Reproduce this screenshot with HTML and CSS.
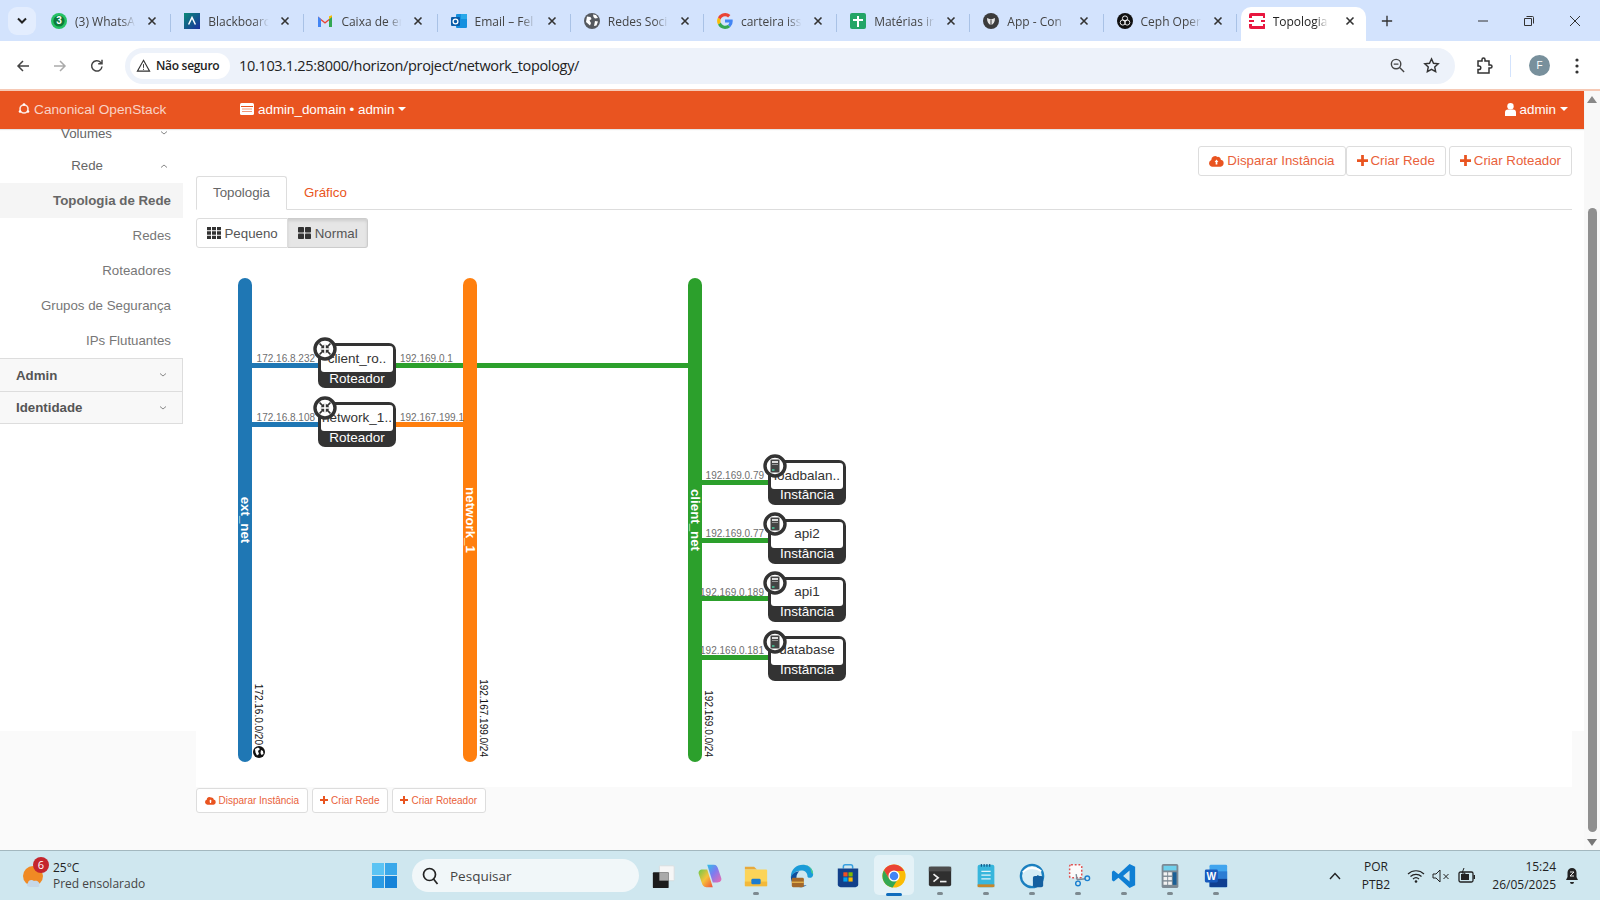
FILE: index.html
```html
<!DOCTYPE html>
<html lang="pt-BR">
<head>
  <meta charset="UTF-8">
  <title>Topologia de Rede</title>
  <link rel="stylesheet" href="styles.css">
</head>
<body>
  <!-- shared icons -->
  <svg class="defs" width="0" height="0">
    <symbol id="i-plus" viewBox="0 0 12 12"><path d="M4.5 0h3v4.5H12v3H7.5V12h-3V7.5H0v-3h4.5z"/></symbol>
    <symbol id="i-cloud" viewBox="0 0 16 12"><path d="M12.6 4.7A3 3 0 0 0 8.9 1.6 4 4 0 0 0 2.5 5 3.6 3.6 0 0 0 3.6 12h8.8a3.7 3.7 0 0 0 .2-7.3zM10 7H8.9v2.6H7.1V7H6l2-2.6z" fill-rule="evenodd"/></symbol>
    <symbol id="i-x" viewBox="0 0 12 12"><path d="M2.5 2.5l7 7M9.5 2.5l-7 7" fill="none" stroke="#333" stroke-width="1.6"/></symbol>
    <symbol id="i-down" viewBox="0 0 10 6"><path d="M2 1.5L5 4l3-2.5" fill="none" stroke="#888" stroke-width="1"/></symbol>
    <symbol id="i-up" viewBox="0 0 10 6"><path d="M2 4.5L5 2l3 2.5" fill="none" stroke="#888" stroke-width="1"/></symbol>
    <symbol id="i-router" viewBox="0 0 24 24">
      <circle cx="12" cy="12" r="10" fill="#fff" stroke="#333" stroke-width="3.4"/>
      <g fill="none" stroke="#333" stroke-width="1.7"><path d="M6.5 6.5l3.8 3.8M17.5 6.5l-3.8 3.8M6.5 17.5l3.8-3.8M17.5 17.5l-3.8-3.8"/></g>
      <g fill="#333"><path d="M11.2 11.2V7.6L7.6 11.2zM12.8 11.2V7.6l3.6 3.6zM11.2 12.8v3.6l-3.6-3.6zM12.8 12.8v3.6l3.6-3.6z"/></g>
    </symbol>
    <symbol id="i-server" viewBox="0 0 24 24">
      <circle cx="12" cy="12" r="10" fill="#fff" stroke="#333" stroke-width="3.4"/>
      <rect x="7.5" y="5.5" width="9" height="13" rx="1" fill="#444"/>
      <rect x="9" y="7" width="6" height="2" fill="#ddd"/>
      <rect x="9" y="10" width="6" height="1" fill="#999"/>
      <rect x="9" y="15" width="2.5" height="2" fill="#4a8"/>
    </symbol>
  </svg>

  <!-- browser tabs -->
  <div class="tabstrip">
    <button class="tab-search"><svg width="12" height="8" viewBox="0 0 12 8"><path d="M2 1.5l4 4 4-4" fill="none" stroke="#222" stroke-width="2"/></svg></button>
    <div class="tab">
      <svg class="favicon" viewBox="0 0 16 16"><circle cx="8" cy="8" r="8" fill="#25c264"/><circle cx="8" cy="8" r="5.6" fill="#0c7a3c"/><text x="8" y="11.4" class="fav-num">3</text></svg>
      <span class="tab-title">(3) WhatsA</span>
      <svg class="tab-close"><use href="#i-x"/></svg>
    </div>
    <div class="tab">
      <svg class="favicon" viewBox="0 0 16 16"><defs><linearGradient id="bb" x1="0" y1="0" x2="1" y2="1"><stop offset="0" stop-color="#0a8a78"/><stop offset="1" stop-color="#1b2f9e"/></linearGradient></defs><rect width="16" height="16" fill="url(#bb)"/><path d="M4.6 11.5L8 4.5l3.4 7" fill="none" stroke="#fff" stroke-width="1.5"/></svg>
      <span class="tab-title">Blackboarc</span>
      <svg class="tab-close"><use href="#i-x"/></svg>
    </div>
    <div class="tab">
      <svg class="favicon" viewBox="0 0 16 16"><path d="M1 14V3.5L8 9l7-5.500V14h-3V7.500L8 10.700 4 7.500V14z" fill="#ea4335"/><path d="M1 3.500V14h3V6z" fill="#4285f4"/><path d="M15 3.500V14h-3V6z" fill="#34a853"/><path d="M12 3.300l3-1v1.700L12 6.300z" fill="#fbbc04"/></svg>
      <span class="tab-title">Caixa de er</span>
      <svg class="tab-close"><use href="#i-x"/></svg>
    </div>
    <div class="tab">
      <svg class="favicon" viewBox="0 0 16 16"><rect x="5" y="1" width="11" height="14" rx="1" fill="#1490df"/><rect x="10" y="1" width="6" height="5" fill="#28a8ea"/><rect x="0" y="4" width="9" height="9" rx="1" fill="#0a5ca8"/><circle cx="4.500" cy="8.500" r="2.400" fill="none" stroke="#fff" stroke-width="1.300"/></svg>
      <span class="tab-title">Email – Fel</span>
      <svg class="tab-close"><use href="#i-x"/></svg>
    </div>
    <div class="tab">
      <svg class="favicon" viewBox="0 0 16 16"><circle cx="8" cy="8" r="8" fill="#55595f"/><path d="M3 3.500l3.500.5 1 2-2 1.500 1.500 2.500-1 2.500L2 9zM9 1.500l3 .5 2 3-3 .5-1.500-1.500zM11 8l3 .5-1.500 4-2.500.5z" fill="#fff"/></svg>
      <span class="tab-title">Redes Soci</span>
      <svg class="tab-close"><use href="#i-x"/></svg>
    </div>
    <div class="tab">
      <svg class="favicon" viewBox="0 0 16 16"><path d="M15.700 8.200c0-.6 0-1.100-.1-1.600H8v3h4.400a3.800 3.800 0 0 1-1.600 2.500l2.500 2a7.700 7.700 0 0 0 2.400-5.900z" fill="#4285f4"/><path d="M8 16c2.200 0 4-.7 5.300-1.900l-2.500-2a4.800 4.800 0 0 1-7.100-2.500l-2.700 2A8 8 0 0 0 8 16z" fill="#34a853"/><path d="M3.700 9.600a4.800 4.800 0 0 1 0-3.200l-2.700-2a8 8 0 0 0 0 7.200z" fill="#fbbc05"/><path d="M8 3.200c1.200 0 2.300.4 3.100 1.200l2.300-2.300A8 8 0 0 0 1 4.400l2.700 2A4.800 4.800 0 0 1 8 3.200z" fill="#ea4335"/></svg>
      <span class="tab-title">carteira iss</span>
      <svg class="tab-close"><use href="#i-x"/></svg>
    </div>
    <div class="tab">
      <svg class="favicon" viewBox="0 0 16 16"><rect width="16" height="16" rx="2" fill="#23a566"/><path d="M7 3h2v3h4v2H9v6H7V8H3V6h4z" fill="#fff"/></svg>
      <span class="tab-title">Matérias ir</span>
      <svg class="tab-close"><use href="#i-x"/></svg>
    </div>
    <div class="tab">
      <svg class="favicon" viewBox="0 0 16 16"><circle cx="8" cy="8" r="8" fill="#3b3b3b"/><path d="M4 5l4 1.500L12 5c0 4-1.500 6.500-4 7-2.500-.5-4-3-4-7z" fill="#e4e4e4"/><path d="M8 7v5" stroke="#3b3b3b" stroke-width="1"/></svg>
      <span class="tab-title">App - Con</span>
      <svg class="tab-close"><use href="#i-x"/></svg>
    </div>
    <div class="tab">
      <svg class="favicon" viewBox="0 0 16 16"><circle cx="8" cy="8" r="8" fill="#111"/><g fill="none" stroke="#fff" stroke-width=".9"><circle cx="8" cy="5.500" r="2.600"/><circle cx="5.800" cy="9.500" r="2.600"/><circle cx="10.200" cy="9.500" r="2.600"/></g></svg>
      <span class="tab-title">Ceph Oper</span>
      <svg class="tab-close"><use href="#i-x"/></svg>
    </div>
    <div class="tab tab-active">
      <svg class="favicon" viewBox="0 0 16 16"><rect width="17" height="16" rx="2" fill="#e8173f"/><rect x="3" y="3" width="11" height="10" fill="#fff"/><rect y="5" width="3" height="2" fill="#fff"/><rect y="9" width="3" height="2" fill="#fff"/><rect x="14" y="5" width="3" height="2" fill="#fff"/><rect x="14" y="9" width="3" height="2" fill="#fff"/><rect x="1" y="7" width="4" height="2" fill="#e8173f"/><rect x="12" y="7" width="4" height="2" fill="#e8173f"/></svg>
      <span class="tab-title">Topologia</span>
      <svg class="tab-close"><use href="#i-x"/></svg>
    </div>
    <svg class="tab-new" viewBox="0 0 14 14"><path d="M7 1v12M1 7h12" stroke="#333" stroke-width="1.600"/></svg>
    <div class="window-controls">
      <svg viewBox="0 0 12 12"><path d="M1 6h10" stroke="#333"/></svg>
      <svg viewBox="0 0 12 12"><path d="M3.500 1.500h6a1 1 0 0 1 1 1v6M1.500 3.500h7v7h-7z" fill="none" stroke="#333"/></svg>
      <svg viewBox="0 0 12 12"><path d="M1 1l10 10M11 1L1 11" stroke="#333"/></svg>
    </div>
  </div>

  <!-- address bar -->
  <div class="toolbar">
    <button class="nav-btn"><svg viewBox="0 0 16 16"><path d="M14 8H3M8 3L3 8l5 5" fill="none" stroke="#444" stroke-width="1.500"/></svg></button>
    <button class="nav-btn"><svg viewBox="0 0 16 16"><path d="M2 8h11M8 3l5 5-5 5" fill="none" stroke="#aaa" stroke-width="1.500"/></svg></button>
    <button class="nav-btn"><svg viewBox="0 0 16 16"><path d="M13 8.500A5.200 5.200 0 1 1 11.500 4.200L13 5.500M13 1.800v3.900H9.200" fill="none" stroke="#444" stroke-width="1.500"/></svg></button>
    <div class="address">
      <div class="chip">
        <svg viewBox="0 0 16 16" width="15" height="15"><path d="M8 2.500L14.500 14h-13z" fill="none" stroke="#333" stroke-width="1.200"/><path d="M8 6.500v4M8 11.500v1.200" stroke="#333"/></svg>
        <span>Não seguro</span>
      </div>
      <span class="url">10.103.1.25:8000/horizon/project/network_topology/</span>
      <svg class="addr-icon addr-zoom" viewBox="0 0 18 18"><circle cx="7.500" cy="7.500" r="5" fill="none" stroke="#444" stroke-width="1.500"/><path d="M11.500 11.500L16 16M5 7.500h5" stroke="#444" stroke-width="1.500"/></svg>
      <svg class="addr-icon" viewBox="0 0 18 18"><path d="M9 2l2.100 4.600 5 .5-3.700 3.400 1 4.900L9 13l-4.400 2.400 1-4.900L1.900 7.100l5-.5z" fill="none" stroke="#333" stroke-width="1.500"/></svg>
    </div>
    <svg class="tool-ext" viewBox="0 0 18 18"><path d="M3 4h4V2.500a1.500 1.500 0 0 1 3 0V4h4v4h1.500a1.500 1.500 0 0 1 0 3H14v5H3v-3.500h1a1.800 1.800 0 0 0 0-3.600H3z" fill="none" stroke="#333" stroke-width="1.500"/></svg>
    <span class="tool-sep"></span>
    <span class="avatar">F</span>
    <svg class="tool-menu" viewBox="0 0 4 18"><circle cx="2" cy="3" r="1.600" fill="#333"/><circle cx="2" cy="9" r="1.600" fill="#333"/><circle cx="2" cy="15" r="1.600" fill="#333"/></svg>
  </div>

  <div class="browser-view">
    <div class="page">
      <header class="topbar">
        <div class="brand">
          <svg width="12" height="12" viewBox="0 0 12 12"><circle cx="6" cy="6" r="4" fill="none" stroke="#fff" stroke-width="1.600" opacity=".85"/><circle cx="6" cy="1.500" r="1.300" fill="#fff"/><circle cx="2" cy="8.500" r="1.300" fill="#fff"/><circle cx="10" cy="8.500" r="1.300" fill="#fff"/></svg>
          <span>Canonical OpenStack</span>
        </div>
        <div class="context">
          <svg width="14" height="12" viewBox="0 0 14 12"><rect width="14" height="12" rx="1.500" fill="#fff"/><path d="M1 3.500h12" stroke="#e95420"/><path d="M2 6h10M2 8.500h10" stroke="#e95420" stroke-opacity=".6"/></svg>
          <span>admin_domain • admin</span>
          <i class="caret"></i>
        </div>
        <div class="user">
          <svg width="11" height="13" viewBox="0 0 11 13"><circle cx="5.500" cy="3.300" r="3.200" fill="#fff"/><path d="M0 13V9.500a3 3 0 0 1 3-3h5a3 3 0 0 1 3 3V13z" fill="#fff"/></svg>
          <span>admin</span>
          <i class="caret"></i>
        </div>
      </header>

      <div class="main">
        <nav class="sidebar">
          <div class="side-items">
            <a class="side-link side-group side-first">Volumes<svg class="chev"><use href="#i-down"/></svg></a>
            <a class="side-link side-group">Rede<svg class="chev"><use href="#i-up"/></svg></a>
            <a class="side-link side-current">Topologia de Rede</a>
            <a class="side-link">Redes</a>
            <a class="side-link">Roteadores</a>
            <a class="side-link">Grupos de Segurança</a>
            <a class="side-link">IPs Flutuantes</a>
            <div class="side-panel">Admin<svg class="chev"><use href="#i-down"/></svg></div>
            <div class="side-panel">Identidade<svg class="chev"><use href="#i-down"/></svg></div>
          </div>
        </nav>

        <section class="content">
          <div class="content-box">
            <div class="actions">
              <a class="btn btn-joined"><svg class="ic-cloud"><use href="#i-cloud"/></svg>Disparar Instância</a>
              <a class="btn btn-joined"><svg class="ic-plus"><use href="#i-plus"/></svg>Criar Rede</a>
              <a class="btn btn-last"><svg class="ic-plus"><use href="#i-plus"/></svg>Criar Roteador</a>
            </div>
            <div class="tabs">
              <a class="tabs-item tabs-active">Topologia</a>
              <a class="tabs-item">Gráfico</a>
            </div>
            <div class="toggle">
              <a class="toggle-btn">
                <svg width="14" height="12" viewBox="0 0 14 12"><path d="M0 0h4v3.300H0zM5 0h4v3.300H5zM10 0h4v3.300h-4zM0 4.300h4v3.400H0zM5 4.300h4v3.400H5zM10 4.300h4v3.400h-4zM0 8.700h4V12H0zM5 8.700h4V12H5zM10 8.700h4V12h-4z" fill="#333"/></svg>
                Pequeno
              </a>
              <a class="toggle-btn toggle-on">
                <svg width="13" height="12" viewBox="0 0 13 12"><rect width="6" height="5.500" rx=".8" fill="#333"/><rect x="7" width="6" height="5.500" rx=".8" fill="#333"/><rect y="6.500" width="6" height="5.500" rx=".8" fill="#333"/><rect x="7" y="6.500" width="6" height="5.500" rx=".8" fill="#333"/></svg>
                Normal
              </a>
            </div>

            <!-- network diagram, viewBox uses page coordinates -->
            <svg class="topology" width="800" height="539" viewBox="196 248 800 539">
              <rect class="link-blue" x="250" y="363" width="70" height="5"/>
              <rect class="link-green" x="394" y="363" width="295" height="5"/>
              <rect class="link-blue" x="250" y="422" width="70" height="5"/>
              <rect class="link-orange" x="394" y="422" width="70" height="5"/>
              <rect class="link-green" x="700" y="480" width="70" height="5"/>
              <rect class="link-green" x="700" y="538" width="70" height="5"/>
              <rect class="link-green" x="700" y="596" width="70" height="5"/>
              <rect class="link-green" x="700" y="655" width="70" height="5"/>

              <rect class="link-blue" x="238" y="278" width="14" height="484" rx="7"/>
              <rect class="link-orange" x="463" y="278" width="14" height="484" rx="7"/>
              <rect class="link-green" x="688" y="278" width="14" height="484" rx="7"/>
              <text class="net-name" transform="translate(241 520) rotate(90)">ext_net</text>
              <text class="net-name" transform="translate(466 520) rotate(90)">network_1</text>
              <text class="net-name" transform="translate(691 520) rotate(90)">client_net</text>

              <text class="net-cidr" transform="translate(255 745) rotate(90)">172.16.0.0/20</text>
              <text class="net-cidr" transform="translate(480 757) rotate(90)">192.167.199.0/24</text>
              <text class="net-cidr" transform="translate(705 757) rotate(90)">192.169.0.0/24</text>
              <circle cx="259" cy="752" r="6" fill="#111"/>
              <path d="M255 749l3-1.500 2 1.500-2 2 1 3-2 1.500-1.500-3zM261 750l2 1 .5 3-2 1-1-2z" fill="#fff"/>

              <text class="ip ip-end" x="315" y="362">172.16.8.232</text>
              <text class="ip" x="400" y="362">192.169.0.1</text>
              <text class="ip ip-end" x="315" y="421">172.16.8.108</text>
              <text class="ip" x="400" y="421">192.167.199.1</text>
              <text class="ip ip-end" x="764" y="479">192.169.0.79</text>
              <text class="ip ip-end" x="764" y="537">192.169.0.77</text>
              <text class="ip ip-end" x="764" y="596">192.169.0.189</text>
              <text class="ip ip-end" x="764" y="654">192.169.0.181</text>

              <g>
                <rect class="node-box" x="318" y="343" width="78" height="45" rx="7"/>
                <rect class="node-top" x="321" y="346" width="72" height="26" rx="3"/>
                <text class="node-name" x="357" y="363">client_ro..</text>
                <text class="node-type" x="357" y="383">Roteador</text>
                <use href="#i-router" x="313" y="337" width="24" height="24"/>
              </g>
              <g>
                <rect class="node-box" x="318" y="402" width="78" height="45" rx="7"/>
                <rect class="node-top" x="321" y="405" width="72" height="26" rx="3"/>
                <text class="node-name" x="357" y="422">network_1..</text>
                <text class="node-type" x="357" y="442">Roteador</text>
                <use href="#i-router" x="313" y="396" width="24" height="24"/>
              </g>
              <g>
                <rect class="node-box" x="768" y="460" width="78" height="45" rx="7"/>
                <rect class="node-top" x="771" y="463" width="72" height="26" rx="3"/>
                <text class="node-name" x="807" y="480">loadbalan..</text>
                <text class="node-type" x="807" y="499">Instância</text>
                <use href="#i-server" x="763" y="454" width="24" height="24"/>
              </g>
              <g>
                <rect class="node-box" x="768" y="519" width="78" height="45" rx="7"/>
                <rect class="node-top" x="771" y="522" width="72" height="26" rx="3"/>
                <text class="node-name" x="807" y="538">api2</text>
                <text class="node-type" x="807" y="558">Instância</text>
                <use href="#i-server" x="763" y="512" width="24" height="24"/>
              </g>
              <g>
                <rect class="node-box" x="768" y="577" width="78" height="45" rx="7"/>
                <rect class="node-top" x="771" y="580" width="72" height="26" rx="3"/>
                <text class="node-name" x="807" y="596">api1</text>
                <text class="node-type" x="807" y="616">Instância</text>
                <use href="#i-server" x="763" y="571" width="24" height="24"/>
              </g>
              <g>
                <rect class="node-box" x="768" y="636" width="78" height="45" rx="7"/>
                <rect class="node-top" x="771" y="639" width="72" height="26" rx="3"/>
                <text class="node-name" x="807" y="654">database</text>
                <text class="node-type" x="807" y="674">Instância</text>
                <use href="#i-server" x="763" y="630" width="24" height="24"/>
              </g>
            </svg>
          </div>
          <div class="actions-bottom">
            <a class="btn btn-xs"><svg class="ic-cloud-xs"><use href="#i-cloud"/></svg>Disparar Instância</a>
            <a class="btn btn-xs"><svg class="ic-plus-xs"><use href="#i-plus"/></svg>Criar Rede</a>
            <a class="btn btn-xs"><svg class="ic-plus-xs"><use href="#i-plus"/></svg>Criar Roteador</a>
          </div>
        </section>
      </div>
    </div>

    <div class="scrollbar">
      <i class="arrow-up"></i>
      <div class="thumb"></div>
      <i class="arrow-down"></i>
    </div>
  </div>

  <!-- windows taskbar -->
  <footer class="taskbar">
    <div class="weather">
      <svg class="weather-icon" width="26" height="26" viewBox="0 0 26 26"><circle cx="11" cy="13" r="10" fill="#f08a24"/><path d="M8 24c-3 0-4-3-2-4 0-3 4-4 6-2 3-1 6 1 5 4 1 1 0 2-1 2z" fill="#c5d8e8"/></svg>
      <span class="weather-badge">6</span>
      <div class="weather-text">
        <span>25°C</span>
        <span>Pred ensolarado</span>
      </div>
    </div>
    <svg class="start" viewBox="0 0 25 25"><rect width="12" height="12" fill="#5cc4f4"/><rect x="13" width="12" height="12" fill="#3aa8ea"/><rect y="13" width="12" height="12" fill="#2a9be4"/><rect x="13" y="13" width="12" height="12" fill="#1583d8"/></svg>
    <div class="search">
      <svg width="18" height="18" viewBox="0 0 18 18"><circle cx="7.500" cy="7.500" r="6" fill="none" stroke="#222" stroke-width="1.700"/><path d="M11.500 12l4 5" stroke="#222" stroke-width="1.700"/></svg>
      <span>Pesquisar</span>
    </div>
    <div class="task-icons">
      <div class="task-icon">
        <svg viewBox="0 0 28 28"><rect x="9" y="3" width="16" height="16" rx="1" fill="#f6f6f6" stroke="#d8dee0"/><rect x="2" y="10" width="17" height="17" rx="1" fill="#1c1c1c"/><rect x="9" y="10" width="10" height="9" fill="#aaa"/></svg>
      </div>
      <div class="task-icon">
        <svg viewBox="0 0 28 28"><defs><linearGradient id="cp" x1="0" y1="0" x2="1" y2="1"><stop offset="0" stop-color="#2fc0e8"/><stop offset=".45" stop-color="#7c7cf0"/><stop offset="1" stop-color="#f06ab0"/></linearGradient><linearGradient id="cp2" x1="0" y1="0" x2="1" y2="1"><stop offset="0" stop-color="#6bc84c"/><stop offset=".5" stop-color="#f6c23a"/><stop offset="1" stop-color="#f0503a"/></linearGradient></defs><path d="M11 2h7c3 0 4 2 5 5l3 9c1 3-1 5-4 5h-5z" fill="url(#cp)"/><path d="M17 26h-7c-3 0-4-2-5-5L2 12C1 9 3 7 6 7h5z" fill="url(#cp2)"/></svg>
      </div>
      <div class="task-icon task-dot">
        <svg viewBox="0 0 28 28"><path d="M2 4h10l3 3H2z" fill="#e8a93a"/><rect x="2" y="7" width="24" height="18" rx="1" fill="#fcd458"/><rect x="2" y="20" width="24" height="5" fill="#f3b93a"/><rect x="9" y="17" width="10" height="6" rx="1.500" fill="#1b7cd0"/></svg>
      </div>
      <div class="task-icon">
        <svg viewBox="0 0 28 28"><path d="M2 15C2 7 8 2 15 2c7 0 11 5 11 10 0 4-4 5-6 3 0-5-3-7-7-7-5 0-8 3-11 7z" fill="#1a9bd8"/><path d="M26 12c0-5-4-10-11-10 4 0 9 2 9 8z" fill="#4bd18a"/><path d="M13 26c-7 0-11-5-11-11 2-3 5-6 9-6-2 2-3 4-3 7 0 5 5 9 11 8-2 1-4 2-6 2z" fill="#0e4f9e"/><rect x="3" y="16" width="13" height="10" rx="1.500" fill="#a3682a"/><rect x="3" y="20" width="13" height="1.500" fill="#e4b04a"/></svg>
      </div>
      <div class="task-icon">
        <svg viewBox="0 0 28 28"><path d="M9 6V4a2 2 0 0 1 2-2h6a2 2 0 0 1 2 2v2" fill="none" stroke="#38a0e0" stroke-width="1.600"/><path d="M3 6h22v17a3 3 0 0 1-3 3H6a3 3 0 0 1-3-3z" fill="#12408a"/><rect x="9" y="10" width="4.500" height="4.500" fill="#f25022"/><rect x="14.500" y="10" width="4.500" height="4.500" fill="#7fba00"/><rect x="9" y="15.500" width="4.500" height="4.500" fill="#00a4ef"/><rect x="14.500" y="15.500" width="4.500" height="4.500" fill="#ffb900"/></svg>
      </div>
      <div class="task-icon task-active">
        <svg viewBox="0 0 28 28"><circle cx="14" cy="14" r="12.500" fill="#fbbc05"/><path d="M14 1.500A12.500 12.500 0 0 0 3.200 7.800L9 17.500 14 8.500h10.800A12.500 12.500 0 0 0 14 1.500z" fill="#ea4335"/><path d="M3.200 7.800A12.500 12.500 0 0 0 12.500 26.400L18 17.500 9 17.500z" fill="#34a853"/><circle cx="14" cy="14" r="6" fill="#fff"/><circle cx="14" cy="14" r="4.600" fill="#4285f4"/></svg>
      </div>
      <div class="task-icon task-dot">
        <svg viewBox="0 0 28 28"><rect x="2" y="4" width="24" height="21" rx="2" fill="#2f2f2f"/><rect x="2" y="4" width="24" height="5" fill="#4d4d4d"/><path d="M7 12l5 4-5 4" fill="none" stroke="#eee" stroke-width="1.800"/><path d="M14 20h7" stroke="#eee" stroke-width="1.800"/></svg>
      </div>
      <div class="task-icon task-dot">
        <svg viewBox="0 0 28 28"><rect x="5" y="2" width="18" height="24" rx="2" fill="#38b6dc"/><rect x="5" y="23" width="18" height="3" fill="#c8862a"/><path d="M9 9h10M9 13h10M9 17h10" stroke="#fff" stroke-width="1.400" opacity=".85"/><path d="M9 1v3M12 1v3M15 1v3M18 1v3" stroke="#0e4f80" stroke-width="1.200"/></svg>
      </div>
      <div class="task-icon task-dot">
        <svg viewBox="0 0 28 28"><circle cx="14" cy="14" r="12" fill="#d6edf6" stroke="#1a7fbf" stroke-width="2.500"/><path d="M4 10c6-6 14-6 20-1" fill="none" stroke="#fff" stroke-width="2"/><path d="M16 26a12 12 0 0 0 10-10l-6-3-5 6z" fill="#1b6fae"/><rect x="15" y="14" width="11" height="12" rx="2" fill="#1560a0"/></svg>
      </div>
      <div class="task-icon task-dot">
        <svg viewBox="0 0 28 28"><rect x="5" y="2" width="13" height="14" rx="1.500" fill="#fbfbfb" stroke="#e05050" stroke-dasharray="2 2" stroke-width="1.600"/><path d="M12 12l1 6M13 18l9-1" stroke="#7a8a98" stroke-width="1.500"/><circle cx="14" cy="22" r="2.500" fill="none" stroke="#1a7fd0" stroke-width="1.500"/><circle cx="24" cy="16.500" r="2.500" fill="none" stroke="#1a7fd0" stroke-width="1.500"/></svg>
      </div>
      <div class="task-icon task-dot">
        <svg viewBox="0 0 28 28"><path d="M20 1l6 3v20l-6 3L8 16l-5 4-2-1.500v-9L3 8l5 4zM20 8l-7 6 7 6z" fill="#0f7fd4" fill-rule="evenodd"/></svg>
      </div>
      <div class="task-icon task-dot">
        <svg viewBox="0 0 28 28"><rect x="5" y="1" width="18" height="26" rx="2" fill="#7d8a94"/><rect x="7" y="3" width="14" height="5" fill="#6fd0ec"/><g fill="#f2f2f2"><rect x="7" y="10" width="4" height="3.500"/><rect x="12" y="10" width="4" height="3.500"/><rect x="7" y="15" width="4" height="3.500"/><rect x="12" y="15" width="4" height="3.500"/><rect x="7" y="20" width="4" height="3.500"/><rect x="12" y="20" width="4" height="3.500"/></g><rect x="17" y="10" width="4" height="13.500" fill="#1a5f96"/></svg>
      </div>
      <div class="task-icon task-dot">
        <svg viewBox="0 0 28 28"><rect x="7" y="2" width="19" height="24" rx="1.500" fill="#41a5ee"/><rect x="7" y="9" width="19" height="8" fill="#2b7cd3"/><rect x="7" y="17" width="19" height="9" fill="#103f91"/><rect x="2" y="7" width="14" height="14" rx="1.500" fill="#185abd"/><text x="9" y="18" class="word-w">W</text></svg>
      </div>
    </div>
    <div class="tray">
      <svg class="tray-chev" width="12" height="8" viewBox="0 0 12 8"><path d="M1 7l5-5.500L11 7" fill="none" stroke="#222" stroke-width="1.400"/></svg>
      <div class="tray-lang"><span>POR</span><span>PTB2</span></div>
      <svg class="tray-wifi" width="18" height="16" viewBox="0 0 18 16"><g fill="none" stroke="#222" stroke-width="1.200"><path d="M1 6a11.500 11.500 0 0 1 16 0M3.500 8.500a8 8 0 0 1 11 0M6 11a4.500 4.500 0 0 1 6 0"/></g><circle cx="9" cy="13.500" r="1.300" fill="#222"/></svg>
      <svg class="tray-sound" width="20" height="14" viewBox="0 0 20 14"><path d="M1 5h3l4-4v12l-4-4H1z" fill="none" stroke="#222"/><path d="M11.500 5l5 5M16.500 5l-5 5" stroke="#222"/></svg>
      <svg class="tray-batt" width="18" height="16" viewBox="0 0 18 16"><rect x="1" y="4" width="14" height="10" rx="1.500" fill="none" stroke="#222" stroke-width="1.300"/><rect x="3" y="6" width="8" height="6" fill="#222"/><path d="M6 0L4 5h3l-1 3" fill="none" stroke="#222"/><rect x="15.500" y="7" width="1.500" height="4" fill="#222"/></svg>
      <div class="clock"><span>15:24</span><span>26/05/2025</span></div>
      <svg class="tray-bell" width="14" height="18" viewBox="0 0 14 18"><path d="M7 1a4.500 4.500 0 0 0-4.500 4.500V10L1 13h12l-1.500-3V5.500A4.500 4.500 0 0 0 7 1z" fill="#222"/><path d="M5 15a2 2 0 0 0 4 0z" fill="#222"/><path d="M5 5h4L5 9h4" fill="none" stroke="#fff" stroke-width=".9"/></svg>
    </div>
  </footer>
</body>
</html>
```

FILE: styles.css
```css
/* General */
html, body {
  margin: 0;
  height: 100%;
  overflow: hidden;
}

body {
  width: 1600px;
  height: 900px;
  display: flex;
  flex-direction: column;
  font-family: "Liberation Sans", Arial, sans-serif;
  font-size: 14px;
  color: #333;
  background: #fff;
}

.defs {
  position: absolute;
}

button {
  border: none;
  background: none;
  padding: 0;
}

/* Browser tabs */
.tabstrip {
  height: 41px;
  flex: none;
  display: flex;
  align-items: flex-start;
  background: #d3e3fd;
}

.tab-search {
  width: 28px;
  height: 28px;
  margin: 7px 4px 0 8px;
  border-radius: 9px;
  background: #e3edfe;
  display: flex;
  align-items: center;
  justify-content: center;
}

.tab {
  width: 133.2px;
  height: 34px;
  box-sizing: border-box;
  margin-top: 7px;
  padding: 0 0 6px 11px;
  display: flex;
  align-items: center;
  position: relative;
}

.tab::after {
  content: "";
  position: absolute;
  right: 2px;
  top: 7px;
  height: 18px;
  border-right: 1px solid #a9c2e6;
}

.favicon {
  width: 16px;
  height: 16px;
  flex: none;
}

.fav-num {
  font-family: "Liberation Sans", sans-serif;
  font-size: 10px;
  font-weight: bold;
  fill: #fff;
  text-anchor: middle;
}

.tab-title {
  width: 66px;
  margin-left: 8px;
  font-family: "Open Sans", sans-serif;
  font-size: 12px;
  color: #444;
  white-space: nowrap;
  -webkit-mask-image: linear-gradient(to right, #000 70%, transparent 92%);
  mask-image: linear-gradient(to right, #000 70%, transparent 92%);
}

.tab-close {
  width: 12px;
  height: 12px;
  margin-left: 5px;
  flex: none;
}

.tab-active {
  width: 125px;
  margin-left: 2px;
  padding-left: 8px;
  background: #fff;
  height: 34px;
  border-radius: 10px 10px 0 0;
}

.tab-active::after {
  display: none;
}

.tab-active .tab-title {
  width: 60px;
  color: #222;
}

.tab-active .tab-close {
  margin-left: 11px;
}

.tab-new {
  width: 12px;
  height: 12px;
  margin: 15px 0 0 15px;
}

.window-controls {
  margin-left: auto;
  padding-right: 2px;
  display: flex;
}

.window-controls svg {
  width: 12px;
  height: 12px;
  padding: 15px 17px;
}

/* Address bar */
.toolbar {
  height: 48px;
  flex: none;
  box-sizing: border-box;
  padding: 1px 0 0 5px;
  display: flex;
  align-items: center;
  gap: 1px;
  background: #fff;
}

.nav-btn {
  width: 36px;
  height: 36px;
  display: flex;
  align-items: center;
  justify-content: center;
}

.nav-btn svg {
  width: 16px;
  height: 16px;
}

.address {
  width: 1330px;
  height: 36px;
  margin-left: 9px;
  box-sizing: border-box;
  padding: 0 15px 0 5px;
  display: flex;
  align-items: center;
  border-radius: 18px;
  background: #edf2fa;
}

.chip {
  width: 100px;
  height: 26px;
  box-sizing: border-box;
  padding-left: 6px;
  display: flex;
  align-items: center;
  gap: 5px;
  border-radius: 13px;
  background: #fff;
  font-family: "Open Sans", sans-serif;
  font-size: 12px;
  font-weight: 600;
  letter-spacing: -0.3px;
  color: #222;
}

.url {
  margin-left: 9px;
  font-family: "Open Sans", sans-serif;
  font-size: 14.5px;
  letter-spacing: -0.32px;
  color: #222;
}

.addr-icon {
  width: 17px;
  height: 17px;
}

.addr-zoom {
  margin-left: auto;
  margin-right: 17px;
}

.tool-ext {
  width: 18px;
  height: 18px;
  margin-left: 19px;
}

.tool-sep {
  width: 1px;
  height: 22px;
  margin-left: 16px;
  background: #d3e3fd;
}

.avatar {
  width: 21px;
  height: 21px;
  margin-left: 17px;
  border-radius: 50%;
  background: #78909c;
  color: #fff;
  font-size: 10px;
  line-height: 21px;
  text-align: center;
}

.tool-menu {
  width: 4px;
  height: 18px;
  margin-left: 24px;
}

/* Page inside the browser */
.browser-view {
  height: 761px;
  flex: none;
  display: flex;
  border-top: 2px solid #f6c9b5;
  box-sizing: border-box;
}

.page {
  width: 1584px;
  display: flex;
  flex-direction: column;
  font-size: 13.3px;
}

.topbar {
  height: 38px;
  flex: none;
  box-sizing: border-box;
  padding-bottom: 2px;
  display: flex;
  align-items: center;
  background: #e95420;
  color: #fff;
  box-shadow: 0 1px 1px rgba(0, 0, 0, 0.1);
  position: relative;
  font-size: 13.4px;
}

.brand {
  width: 240px;
  box-sizing: border-box;
  padding-left: 18px;
  display: flex;
  align-items: center;
  gap: 4px;
  font-size: 13.7px;
  color: rgba(255, 255, 255, 0.75);
}

.context,
.user {
  display: flex;
  align-items: center;
  gap: 4px;
}

.user {
  margin-left: auto;
  padding-right: 16px;
}

.caret {
  width: 0;
  height: 0;
  border-left: 4px solid transparent;
  border-right: 4px solid transparent;
  border-top: 4px solid #fff;
}

.main {
  flex: 1;
  display: flex;
  background: linear-gradient(#fff 602px, #fafafa 602px);
  overflow: hidden;
}

/* Sidebar */
.sidebar {
  width: 196px;
  height: 602px;
  flex: none;
  overflow: hidden;
}

.side-items {
  width: 183px;
  margin-top: -11px;
}

.side-link {
  height: 35px;
  box-sizing: border-box;
  padding-right: 12px;
  display: flex;
  align-items: center;
  justify-content: flex-end;
  color: #777;
  position: relative;
}

.side-group {
  color: #666;
  padding-right: 80px;
}

.side-first {
  height: 30px;
  padding-right: 71px;
}

.side-current {
  font-weight: bold;
  color: #666;
  background: #f5f5f5;
}

.chev {
  width: 10px;
  height: 6px;
  position: absolute;
  right: 14px;
  top: calc(50% - 3px);
}

.side-panel {
  height: 33px;
  box-sizing: border-box;
  padding-left: 16px;
  display: flex;
  align-items: center;
  font-weight: bold;
  color: #555;
  background: #f8f8f8;
  border-top: 1px solid #ddd;
  border-right: 1px solid #ddd;
  position: relative;
}

.side-panel:last-child {
  border-bottom: 1px solid #ddd;
}

/* Content */
.content {
  width: 1376px;
  flex: none;
}

.content-box {
  height: 658px;
  box-sizing: border-box;
  padding-top: 17px;
  background: #fff;
}

.actions {
  height: 30px;
  display: flex;
  justify-content: flex-end;
}

.btn {
  height: 30px;
  box-sizing: border-box;
  display: flex;
  align-items: center;
  gap: 3px;
  padding-bottom: 1px;
  border: 1px solid #ddd;
  border-radius: 3px;
  background: #fff;
  color: #e9613a;
  fill: #e95420;
}

.btn-joined {
  padding-left: 10px;
  padding-right: 10px;
}

.btn-joined:nth-child(2) {
  margin-right: 3px;
}

.btn-last {
  padding-left: 10px;
  padding-right: 10px;
}

.ic-cloud {
  width: 15px;
  height: 12px;
}

.ic-plus {
  width: 11px;
  height: 11px;
}

.tabs {
  height: 34px;
  display: flex;
  border-bottom: 1px solid #ddd;
  box-sizing: border-box;
}

.tabs-item {
  height: 33px;
  box-sizing: border-box;
  padding: 0 16px 1px;
  display: flex;
  align-items: center;
  color: #e95420;
  border: 1px solid transparent;
  margin-bottom: -1px;
}

.tabs-active {
  color: #666;
  background: #fff;
  height: 34px;
  border-color: #ddd #ddd #fff;
  border-radius: 3px 3px 0 0;
}

.toggle {
  margin-top: 8px;
  display: flex;
}

.toggle-btn {
  height: 30px;
  box-sizing: border-box;
  padding: 0 9.5px;
  display: flex;
  align-items: center;
  gap: 4px;
  border: 1px solid #ddd;
  border-radius: 3px 0 0 3px;
  color: #555;
}

.toggle-on {
  border-radius: 0 3px 3px 0;
  border-left: none;
  background: #e6e6e6;
  box-shadow: inset 0 2px 3px rgba(0, 0, 0, 0.1);
  border-color: #ccc;
}

/* Topology diagram */
.topology {
  display: block;
}

.topology text {
  font-family: "Liberation Sans", Arial, sans-serif;
}

.link-blue {
  fill: #1f77b4;
}

.link-orange {
  fill: #ff7f0e;
}

.link-green {
  fill: #2ca02c;
}

.topology .net-name {
  font-size: 13.3px;
  font-weight: bold;
  fill: #fff;
  text-anchor: middle;
}

.topology .net-cidr {
  font-size: 10px;
  fill: #111;
  text-anchor: end;
}

.topology .ip {
  font-size: 10px;
  fill: #6f6f6f;
}

.topology .ip-end {
  text-anchor: end;
}

.node-box {
  fill: #333;
}

.node-top {
  fill: #fff;
}

.topology .node-name {
  font-size: 13.5px;
  fill: #333;
  text-anchor: middle;
}

.topology .node-type {
  font-size: 13.5px;
  fill: #fff;
  text-anchor: middle;
}

.actions-bottom {
  margin-top: 1px;
  display: flex;
  gap: 4px;
}

.btn-xs {
  height: 25px;
  padding: 0 7.5px 1px;
  font-size: 10px;
}

.ic-cloud-xs {
  width: 11px;
  height: 9px;
}

.ic-plus-xs {
  width: 8px;
  height: 8px;
}

/* Scrollbar */
.scrollbar {
  width: 16px;
  flex: none;
  background: #f8f8f8;
  display: flex;
  flex-direction: column;
  align-items: center;
}

.arrow-up,
.arrow-down {
  width: 0;
  height: 0;
  border-left: 5px solid transparent;
  border-right: 5px solid transparent;
}

.arrow-up {
  margin-top: 5px;
  border-bottom: 7px solid #888;
}

.thumb {
  width: 9px;
  height: 624px;
  margin-top: 105px;
  border-radius: 5px;
  background: #8f8f8f;
}

.arrow-down {
  margin-top: 7px;
  border-top: 7px solid #777;
}

/* Taskbar */
.taskbar {
  height: 50px;
  flex: none;
  box-sizing: border-box;
  display: flex;
  align-items: center;
  background: #cfe7ef;
  border-top: 1px solid #a3b8bf;
  font-family: "Open Sans", sans-serif;
  font-size: 12px;
  color: #222;
}

.weather {
  width: 372px;
  box-sizing: border-box;
  padding-left: 22px;
  display: flex;
  align-items: center;
  position: relative;
}

.weather-badge {
  position: absolute;
  left: 33px;
  top: -3px;
  width: 16px;
  height: 16px;
  border-radius: 50%;
  background: #c4262e;
  color: #fff;
  font-size: 11px;
  line-height: 16px;
  text-align: center;
}

.weather-text {
  margin-left: 5px;
  display: flex;
  flex-direction: column;
  line-height: 16px;
}

.weather-text span:last-child {
  color: #444;
}

.start {
  width: 25px;
  height: 25px;
  flex: none;
}

.search {
  width: 227px;
  height: 33px;
  flex: none;
  margin-left: 15px;
  box-sizing: border-box;
  padding-left: 10px;
  display: flex;
  align-items: center;
  gap: 10px;
  border-radius: 17px;
  background: #f1f7f9;
  font-size: 13.5px;
  color: #444;
}

.task-icons {
  margin-left: 2px;
  display: flex;
}

.task-icon {
  width: 46px;
  height: 49px;
  display: flex;
  align-items: center;
  justify-content: center;
  position: relative;
}

.task-icon svg {
  width: 26px;
  height: 26px;
}

.task-dot::after {
  content: "";
  position: absolute;
  left: 20px;
  bottom: 5px;
  width: 6px;
  height: 3px;
  border-radius: 2px;
  background: #7d8a90;
}

.task-active::before {
  content: "";
  position: absolute;
  left: 3px;
  top: 4px;
  width: 40px;
  height: 40px;
  border-radius: 5px;
  background: #e4f2f7;
}

.task-active svg {
  position: relative;
}

.task-active::after {
  content: "";
  position: absolute;
  left: 15px;
  bottom: 4px;
  width: 16px;
  height: 3px;
  border-radius: 2px;
  background: #0f6cbd;
}

.word-w {
  font-family: "Liberation Sans", sans-serif;
  font-size: 11px;
  font-weight: bold;
  fill: #fff;
  text-anchor: middle;
}

.tray {
  flex: 1;
  display: flex;
  align-items: center;
}

.tray-chev {
  margin-left: 90px;
}

.tray-lang {
  width: 40px;
  margin-left: 15px;
  display: flex;
  flex-direction: column;
  align-items: center;
  line-height: 18px;
}

.tray-wifi {
  margin-left: 11px;
}

.tray-sound {
  margin-left: 7px;
}

.tray-batt {
  margin-left: 6px;
}

.clock {
  width: 70px;
  margin-left: 10px;
  display: flex;
  flex-direction: column;
  align-items: flex-end;
  line-height: 18px;
}

.tray-bell {
  margin-left: 9px;
}
```
